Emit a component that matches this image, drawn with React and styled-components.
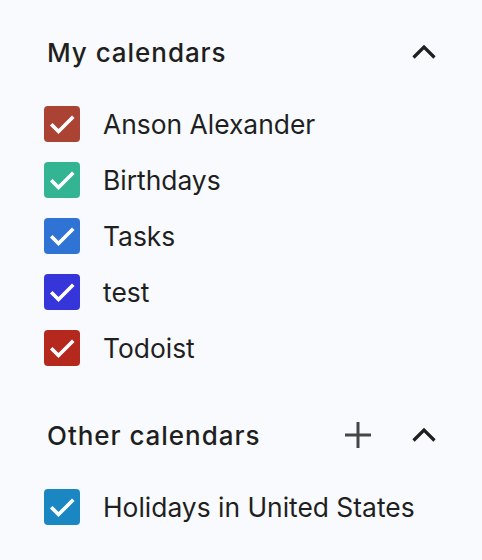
import React from "react";
import styled, { createGlobalStyle } from "styled-components";

const Global = createGlobalStyle`
  html, body { margin: 0; padding: 0; background: #f8fafd; }
  body { font-family: Inter, Roboto, sans-serif; color: #1f1f1f; }
`;

const Panel = styled.div`
  width: 482px;
  height: 560px;
  box-sizing: border-box;
  padding: 24px 34px 0 44px;
  display: flex;
  flex-direction: column;
  gap: 31px;
  background: #f8fafd;
`;

const Section = styled.section`
  display: flex;
  flex-direction: column;
`;

const Header = styled.div`
  height: 56px;
  display: flex;
  align-items: center;
  margin-bottom: 16px;
`;

const Title = styled.h2`
  flex: 1;
  margin: 0 0 0 3px;
  font-size: 26px;
  font-weight: 500;
  letter-spacing: 0.95px;
  color: #1f1f1f;
`;

const IconButton = styled.button`
  width: 48px;
  height: 48px;
  border: none;
  background: transparent;
  padding: 0;
  display: flex;
  align-items: center;
  justify-content: center;
  margin-left: ${(p) => p.$gap || 0}px;
  color: ${(p) => p.$color || "#1f1f1f"};
`;

const Row = styled.label`
  height: 56px;
  display: flex;
  align-items: center;
  gap: 23px;
`;

const Box = styled.span`
  width: 36px;
  height: 36px;
  border-radius: 4px;
  background: ${(p) => p.$color};
  display: flex;
  align-items: center;
  justify-content: center;
  flex-shrink: 0;
`;

const Label = styled.span`
  font-size: 26.4px;
  color: #1f1f1f;
`;

const Check = () => (
  <svg width="36" height="36" viewBox="0 0 36 36">
    <polyline
      points="8.5,19.5 14.5,25.5 28,12"
      fill="none"
      stroke="#fff"
      strokeWidth="3.6"
      strokeLinecap="square"
    />
  </svg>
);

const Chevron = () => (
  <svg width="26" height="16" viewBox="0 0 26 16">
    <polyline
      points="2.5,13.5 13,3 23.5,13.5"
      fill="none"
      stroke="currentColor"
      strokeWidth="3.2"
    />
  </svg>
);

const Plus = () => (
  <svg width="28" height="28" viewBox="0 0 28 28">
    <path d="M14 1v26M1 14h26" stroke="currentColor" strokeWidth="3" fill="none" />
  </svg>
);

const mine = [
  { name: "Anson Alexander", color: "#ab4334" },
  { name: "Birthdays", color: "#33b594" },
  { name: "Tasks", color: "#2f73d4" },
  { name: "test", color: "#3535d9" },
  { name: "Todoist", color: "#b5281d" },
];

const others = [{ name: "Holidays in United States", color: "#1a87c3" }];

const CalRow = ({ name, color }) => (
  <Row>
    <Box $color={color}>
      <Check />
    </Box>
    <Label>{name}</Label>
  </Row>
);

export default function App() {
  return (
    <>
      <Global />
      <Panel>
        <Section>
          <Header>
            <Title>My calendars</Title>
            <IconButton>
              <Chevron />
            </IconButton>
          </Header>
          {mine.map((c) => (
            <CalRow key={c.name} {...c} />
          ))}
        </Section>
        <Section>
          <Header>
            <Title>Other calendars</Title>
            <IconButton $color="#444746">
              <Plus />
            </IconButton>
            <IconButton $gap={18}>
              <Chevron />
            </IconButton>
          </Header>
          {others.map((c) => (
            <CalRow key={c.name} {...c} />
          ))}
        </Section>
      </Panel>
    </>
  );
}
